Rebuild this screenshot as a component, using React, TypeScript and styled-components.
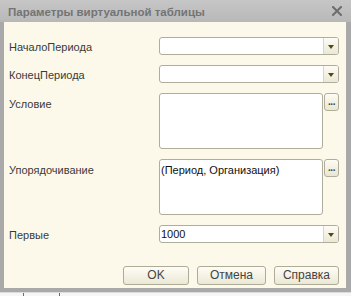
import React from 'react'
import styled, { createGlobalStyle } from 'styled-components'

const GlobalStyle = createGlobalStyle`
  html, body {
    margin: 0;
    padding: 0;
    background: #f4f4f4;
  }

  body {
    font-family: 'Liberation Sans', Arial, sans-serif;
    font-size: 11px;
    color: #3a3a3a;
  }
`

const Frame = styled.div`
  width: 351px;
  height: 292px;
  box-sizing: border-box;
  background: #a9a9a9;
  display: flex;
  flex-direction: column;
`

const TitleBar = styled.div`
  height: 22px;
  flex: none;
  display: flex;
  align-items: center;
  justify-content: space-between;
  padding: 0 9px 0 8px;
  background: linear-gradient(#c6c6c6, #b8b8b8);
`

const Title = styled.span`
  font-size: 11.5px;
  font-weight: bold;
  color: #747474;
  padding-top: 1px;
`

const Body = styled.div`
  flex: 1;
  margin: 0 5px 4px 4px;
  padding: 15px 7px 2px 5px;
  background: #fcf9ea;
  display: grid;
  grid-template-columns: 150px 1fr;
  grid-auto-rows: min-content;
  row-gap: 10px;
`

const Label = styled.div<{ $top?: boolean }>`
  display: flex;
  align-items: ${(p) => (p.$top ? 'flex-start' : 'center')};
  padding-top: ${(p) => (p.$top ? '5px' : '3px')};
  line-height: 13px;
  color: #3a3a3a;
`

const Combo = styled.div`
  height: 18px;
  box-sizing: border-box;
  display: flex;
  background: #fff;
  border: 1px solid #b0ad9a;
  border-radius: 3px;
  overflow: hidden;
`

const Value = styled.div`
  flex: 1;
  padding: 2px 2px 0 1px;
  line-height: 13px;
  color: #111;
  white-space: nowrap;
`

const DropButton = styled.div`
  width: 14px;
  flex: none;
  display: flex;
  align-items: center;
  justify-content: center;
  border-left: 1px solid #d9d6c2;
  background: linear-gradient(#fdfcf5, #ebe8d6);
`

const Arrow = styled.span`
  width: 0;
  height: 0;
  border-left: 3.5px solid transparent;
  border-right: 3.5px solid transparent;
  border-top: 4px solid #4f4a14;
  margin-top: 1px;
`

const MultiRow = styled.div`
  display: flex;
  gap: 1px;
  align-items: flex-start;
`

const TextBox = styled.div<{ $h: number }>`
  flex: 1;
  height: ${(p) => p.$h}px;
  box-sizing: border-box;
  background: #fff;
  border: 1px solid #b0ad9a;
  border-radius: 3px;
  padding: 4px 2px 0 1px;
  line-height: 13px;
  color: #111;
`

const ChoiceButton = styled.div`
  width: 15px;
  height: 18px;
  box-sizing: border-box;
  flex: none;
  border: 1px solid #b0ad9a;
  border-radius: 3px;
  background: linear-gradient(#fdfcf5, #e9e6d2);
  display: flex;
  align-items: flex-end;
  justify-content: center;
  font-size: 10px;
  font-weight: bold;
  line-height: 10px;
  padding-bottom: 3px;
  color: #444;
  letter-spacing: -0.5px;
`

const Buttons = styled.div`
  grid-column: 1 / -1;
  margin-top: 13px;
  display: flex;
  justify-content: flex-end;
  gap: 8px;
`

const Button = styled.button<{ $w: number }>`
  width: ${(p) => p.$w}px;
  height: 19px;
  box-sizing: border-box;
  padding: 0;
  border: 1px solid #aeab96;
  border-radius: 3px;
  background: linear-gradient(#fefdf6, #ebe8d4);
  font-family: 'Liberation Sans', Arial, sans-serif;
  font-size: 12px;
  color: #444;
  line-height: 17px;
`

const Strip = styled.div`
  height: 4px;
  background: #f6f6f6;
  border-top: 1px solid #dcdcdc;
  box-sizing: border-box;
`

const Tab = styled.div`
  margin-left: 23px;
  width: 35px;
  height: 3px;
  border-left: 1px solid #6a6a6a;
  border-right: 1px solid #6a6a6a;
`

function CloseIcon() {
  return (
    <svg width="10" height="10" viewBox="0 0 10 10">
      <path d="M1 1 L9 9 M9 1 L1 9" stroke="#6d6d6d" strokeWidth="2" strokeLinecap="square" />
    </svg>
  )
}

function ComboField({ value }: { value?: string }) {
  return (
    <Combo>
      <Value>{value}</Value>
      <DropButton>
        <Arrow />
      </DropButton>
    </Combo>
  )
}

function MultiField({ value, height }: { value?: string; height: number }) {
  return (
    <MultiRow>
      <TextBox $h={height}>{value}</TextBox>
      <ChoiceButton>...</ChoiceButton>
    </MultiRow>
  )
}

export default function App() {
  return (
    <>
      <GlobalStyle />
      <Frame>
        <TitleBar>
          <Title>Параметры виртуальной таблицы</Title>
          <CloseIcon />
        </TitleBar>
        <Body>
          <Label>НачалоПериода</Label>
          <ComboField />

          <Label>КонецПериода</Label>
          <ComboField />

          <Label $top>Условие</Label>
          <MultiField height={56} />

          <Label $top>Упорядочивание</Label>
          <MultiField height={56} value="(Период, Организация)" />

          <Label>Первые</Label>
          <ComboField value="1000" />

          <Buttons>
            <Button $w={66}>OK</Button>
            <Button $w={69}>Отмена</Button>
            <Button $w={65}>Справка</Button>
          </Buttons>
        </Body>
      </Frame>
      <Strip>
        <Tab />
      </Strip>
    </>
  )
}
